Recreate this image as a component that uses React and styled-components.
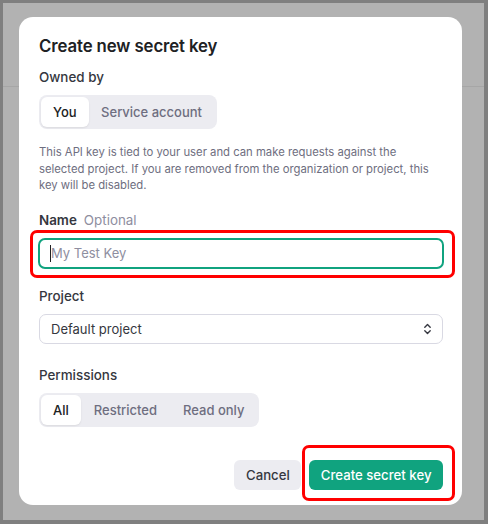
import React from "react";
import styled, { createGlobalStyle } from "styled-components";

const Global = createGlobalStyle`
  html, body { margin: 0; padding: 0; }
  body { font-family: Inter, "Noto Sans", sans-serif; -webkit-font-smoothing: antialiased; }
  * { box-sizing: border-box; }
`;

const Backdrop = styled.div`
  width: 488px;
  height: 524px;
  border-style: solid;
  border-color: #7f7f7f;
  border-width: 3px 4px 4px 3px;
  background:
    linear-gradient(#a6a6a6, #a6a6a6) 0 83px / 100% 1px no-repeat,
    #b2b2b2;
  padding: 14px 0 0 16px;
`;

const Modal = styled.div`
  width: 443px;
  height: 488px;
  background: #fff;
  border-radius: 14px;
  padding: 17px 19px 0 20px;
  display: flex;
  flex-direction: column;
  color: #202123;
`;

const Title = styled.h2`
  margin: 0;
  font-size: 16.8px;
  line-height: 24px;
  font-weight: 600;
  letter-spacing: -0.1px;
`;

const Label = styled.div`
  margin-top: ${(p) => p.$top || 0}px;
  font-size: 13.4px;
  line-height: 20px;
  font-weight: ${(p) => (p.$bold ? 600 : 500)};
  color: #353740;
  display: flex;
  gap: 7px;
`;

const Hint = styled.span`
  font-weight: 400;
  color: #8e8ea0;
`;

const Segmented = styled.div`
  margin-top: ${(p) => p.$top || 0}px;
  align-self: flex-start;
  display: flex;
  background: #ececf1;
  border-radius: 8px;
  padding: 2px;
  height: 34px;
`;

const Segment = styled.div`
  display: flex;
  align-items: center;
  padding: 0 ${(p) => p.$pad || 12.5}px;
  border-radius: 6px;
  font-size: 13px;
  font-weight: 500;
  color: ${(p) => (p.$active ? "#202123" : "#6e6e80")};
  background: ${(p) => (p.$active ? "#fff" : "transparent")};
  box-shadow: ${(p) => (p.$active ? "0 1px 2px rgba(0,0,0,0.08)" : "none")};
`;

const Desc = styled.p`
  margin: 15px 0 0;
  font-size: 11.3px;
  line-height: 16.5px;
  color: #6e6e80;
  padding-right: 9px;
`;

const Highlight = styled.div`
  margin: 0 -12px 0 -9px;
  border: 3px solid #f00;
  border-radius: 7px;
  padding: 5px 8px 6px 5px;
`;

const Input = styled.div`
  height: 31px;
  border: 2px solid #10a37f;
  border-radius: 7px;
  display: flex;
  align-items: center;
  padding-left: 10px;
  font-size: 13px;
  color: #8e8ea0;
`;

const Caret = styled.span`
  width: 1px;
  height: 17px;
  background: #202123;
`;

const Select = styled.div`
  margin-top: 8px;
  height: 30px;
  border: 1px solid #d9d9e3;
  border-radius: 7px;
  display: flex;
  align-items: center;
  justify-content: space-between;
  padding: 0 10px 0 11px;
  font-size: 13px;
  color: #353740;
`;

const Footer = styled.div`
  margin-top: auto;
  margin-bottom: 4px;
  margin-right: -12px;
  display: flex;
  justify-content: flex-end;
  align-items: flex-end;
  gap: 1px;
`;

const Button = styled.button`
  height: 30px;
  border: none;
  border-radius: 6px;
  padding: 0 11.5px;
  font-family: inherit;
  font-size: 13.2px;
  font-weight: 500;
  background: ${(p) => (p.$primary ? "#10a37f" : "#ececf1")};
  color: ${(p) => (p.$primary ? "#fff" : "#353740")};
`;

const CancelButton = styled(Button)`
  margin-bottom: 11px;
`;

const ButtonRing = styled.div`
  border: 3px solid #f00;
  border-radius: 7px;
  padding: 12px 9px 8px 4px;
`;

function UpDown() {
  return (
    <svg width="9" height="12" viewBox="0 0 9 12" fill="none" stroke="#353740" strokeWidth="1.4" strokeLinecap="round" strokeLinejoin="round">
      <path d="M1.8 4.2 4.5 1.6 7.2 4.2" />
      <path d="M1.8 7.8 4.5 10.4 7.2 7.8" />
    </svg>
  );
}

export default function App() {
  return (
    <>
      <Global />
      <Backdrop>
        <Modal>
          <Title>Create new secret key</Title>
          <Label $top={9}>Owned by</Label>
          <Segmented $top={8}>
            <Segment $active $pad={12}>You</Segment>
            <Segment $pad={12.5}>Service account</Segment>
          </Segmented>
          <Desc>
            This API key is tied to your user and can make requests against the
            selected project. If you are removed from the organization or
            project, this key will be disabled.
          </Desc>
          <Label $top={16} $bold>
            Name <Hint>Optional</Hint>
          </Label>
          <Highlight>
            <Input>
              <Caret />
              My Test Key
            </Input>
          </Highlight>
          <Label $top={8}>Project</Label>
          <Select>
            Default project
            <UpDown />
          </Select>
          <Label $top={21}>Permissions</Label>
          <Segmented $top={8}>
            <Segment $active $pad={12}>All</Segment>
            <Segment $pad={13}>Restricted</Segment>
            <Segment $pad={13}>Read only</Segment>
          </Segmented>
          <Footer>
            <CancelButton>Cancel</CancelButton>
            <ButtonRing>
              <Button $primary>Create secret key</Button>
            </ButtonRing>
          </Footer>
        </Modal>
      </Backdrop>
    </>
  );
}
